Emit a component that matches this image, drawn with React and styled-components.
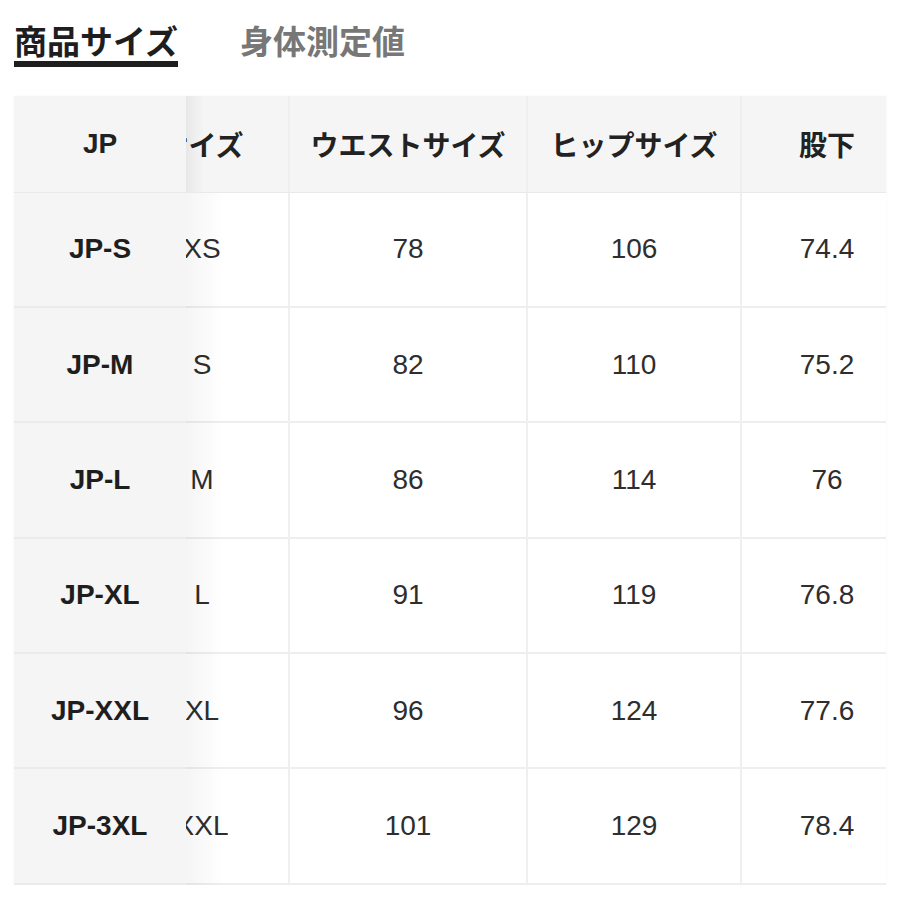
import React, { useLayoutEffect, useRef } from 'react';
import styled, { createGlobalStyle } from 'styled-components';

const GlobalStyle = createGlobalStyle`
  body {
    margin: 0;
    background: #fff;
    font-family: "Liberation Sans", "Noto Sans CJK JP", sans-serif;
    color: #222;
  }
`;

const Page = styled.div`
  padding: 24px 14px 0;
`;

const Tabs = styled.div`
  display: flex;
  gap: 62px;
`;

const Tab = styled.div`
  display: flex;
  flex-direction: column;
  gap: 4px;
  font-family: "Noto Sans CJK JP", sans-serif;
  font-size: 33px;
  line-height: 33px;
  font-weight: 700;
  color: ${(p) => (p.active ? '#1e1e1e' : '#777')};
  &::after {
    content: '';
    height: 6px;
    background: ${(p) => (p.active ? '#1e1e1e' : 'transparent')};
  }
`;

const Viewport = styled.div`
  margin-top: 29px;
  width: 872px;
  overflow-x: auto;
  scrollbar-width: none;
  box-shadow: 0 0 3px rgba(0, 0, 0, 0.04);
  &::-webkit-scrollbar {
    display: none;
  }
`;

const Table = styled.table`
  border-collapse: separate;
  border-spacing: 0;
  table-layout: fixed;
  width: 970px;
`;

const Th = styled.th`
  height: 95.5px;
  padding: 0;
  background: #f5f5f5;
  font-family: "Liberation Sans", "Noto Sans CJK JP", sans-serif;
  font-size: 28px;
  font-weight: 700;
  color: #222;
  text-align: center;
  white-space: nowrap;
  border-bottom: 1px solid #e9e9e9;
  border-right: 2px solid #efefef;
`;

const Td = styled.td`
  height: 113.4px;
  padding: 0;
  background: #fff;
  font-size: 28px;
  font-weight: ${(p) => (p.bold ? 700 : 400)};
  color: ${(p) => (p.bold ? '#1e1e1e' : '#2e2e2e')};
  text-align: center;
  white-space: nowrap;
  border-bottom: 2px solid #eeeeee;
  border-right: 2px solid #efefef;
`;

const StickyTh = styled(Th)`
  position: sticky;
  left: 0;
  z-index: 2;
  border-right: none;
  &::after {
    content: '';
    position: absolute;
    top: 0;
    bottom: 0;
    left: 100%;
    width: 18px;
    background: linear-gradient(to right, rgba(0, 0, 0, 0.05), rgba(0, 0, 0, 0));
  }
`;

const StickyTd = styled(Td)`
  position: sticky;
  left: 0;
  z-index: 2;
  background: #f5f5f5;
  border-right: none;
  border-bottom-color: #ebebeb;
  &::after {
    content: '';
    position: absolute;
    top: 0;
    bottom: -2px;
    left: 100%;
    width: 38px;
    background: linear-gradient(to right, rgba(0, 0, 0, 0.04), rgba(0, 0, 0, 0));
  }
`;

const columns = ['JP', 'サイズ', 'ウエストサイズ', 'ヒップサイズ', '股下'];
const widths = [172, 174, 238, 214, 172];

const rows = [
  ['JP-S', 'XS', '78', '106', '74.4'],
  ['JP-M', 'S', '82', '110', '75.2'],
  ['JP-L', 'M', '86', '114', '76'],
  ['JP-XL', 'L', '91', '119', '76.8'],
  ['JP-XXL', 'XL', '96', '124', '77.6'],
  ['JP-3XL', 'XXL', '101', '129', '78.4'],
];

export default function App() {
  const scrollRef = useRef(null);

  useLayoutEffect(() => {
    // 表は横に少しスクロールした状態
    if (scrollRef.current) scrollRef.current.scrollLeft = 70;
  }, []);

  return (
    <Page>
      <GlobalStyle />
      <Tabs>
        <Tab active>商品サイズ</Tab>
        <Tab>身体測定値</Tab>
      </Tabs>
      <Viewport ref={scrollRef}>
        <Table>
          <colgroup>
            {widths.map((w, i) => (
              <col key={i} style={{ width: w }} />
            ))}
          </colgroup>
          <thead>
            <tr>
              {columns.map((c, i) =>
                i === 0 ? <StickyTh key={c}>{c}</StickyTh> : <Th key={c}>{c}</Th>
              )}
            </tr>
          </thead>
          <tbody>
            {rows.map((r) => (
              <tr key={r[0]}>
                {r.map((v, i) =>
                  i === 0 ? (
                    <StickyTd key={i} bold>
                      {v}
                    </StickyTd>
                  ) : (
                    <Td key={i}>{v}</Td>
                  )
                )}
              </tr>
            ))}
          </tbody>
        </Table>
      </Viewport>
    </Page>
  );
}
